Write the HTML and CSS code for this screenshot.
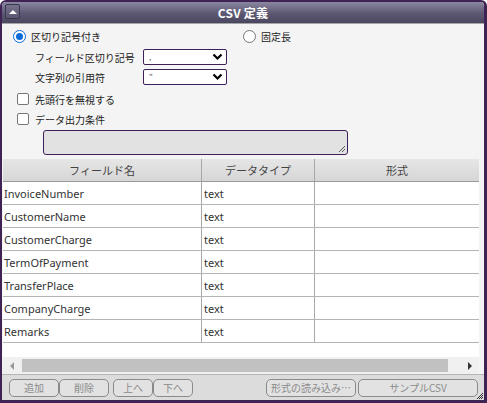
FILE: index.html
```html
<!DOCTYPE html>
<html>
<head>
<meta charset="utf-8">
<link rel="stylesheet" href="styles.css">
</head>
<body>
<div class="win">
  <div class="titlebar">
    <span class="collapse"><svg width="8" height="5" viewBox="0 0 8 5"><path d="M0 5 L4 1 L8 5 Z" fill="#fff"/></svg></span>
    <span class="title">CSV 定義</span>
  </div>
  <div class="body">
    <div class="opts">
      <div class="radio-row">
        <label class="radio checked"><span class="rb"></span>区切り記号付き</label>
        <label class="radio fixed"><span class="rb"></span>固定長</label>
      </div>
      <div class="field-row">
        <span class="flabel">フィールド区切り記号</span>
        <span class="select"><span class="val">,</span><svg class="chev" width="11" height="8" viewBox="0 0 11 8"><path d="M1.5 1.5 L5.5 5.5 L9.5 1.5" fill="none" stroke="#000" stroke-width="2.2"/></svg></span>
      </div>
      <div class="field-row">
        <span class="flabel">文字列の引用符</span>
        <span class="select"><span class="val">"</span><svg class="chev" width="11" height="8" viewBox="0 0 11 8"><path d="M1.5 1.5 L5.5 5.5 L9.5 1.5" fill="none" stroke="#000" stroke-width="2.2"/></svg></span>
      </div>
      <label class="check first"><span class="cb"></span>先頭行を無視する</label>
      <label class="check"><span class="cb"></span>データ出力条件</label>
      <div class="ta"><svg class="grip" width="8" height="8" viewBox="0 0 8 8"><path d="M7 1 L1 7 M7 4 L4 7" stroke="#555" stroke-width="1" fill="none"/></svg></div>
    </div>
    <div class="grid">
      <div class="thead">
        <div class="th c1">フィールド名</div>
        <div class="th c2">データタイプ</div>
        <div class="th c3">形式</div>
      </div>
      <div class="tbody">
        <div class="tr"><div class="td c1">InvoiceNumber</div><div class="td c2">text</div><div class="td c3"></div></div>
        <div class="tr"><div class="td c1">CustomerName</div><div class="td c2">text</div><div class="td c3"></div></div>
        <div class="tr"><div class="td c1">CustomerCharge</div><div class="td c2">text</div><div class="td c3"></div></div>
        <div class="tr"><div class="td c1">TermOfPayment</div><div class="td c2">text</div><div class="td c3"></div></div>
        <div class="tr"><div class="td c1">TransferPlace</div><div class="td c2">text</div><div class="td c3"></div></div>
        <div class="tr"><div class="td c1">CompanyCharge</div><div class="td c2">text</div><div class="td c3"></div></div>
        <div class="tr"><div class="td c1">Remarks</div><div class="td c2">text</div><div class="td c3"></div></div>
      </div>
      <div class="hscroll">
        <svg class="arr" width="5" height="8" viewBox="0 0 5 8"><path d="M5 0 L1 4 L5 8 Z" fill="#999"/></svg>
        <div class="thumb"></div>
        <svg class="arr" width="5" height="8" viewBox="0 0 5 8"><path d="M0 0 L4 4 L0 8 Z" fill="#333"/></svg>
      </div>
    </div>
    <div class="btnbar">
      <span class="btn w50">追加</span>
      <span class="btn w50">削除</span>
      <span class="btn w40 gapl">上へ</span>
      <span class="btn w40">下へ</span>
      <span class="spacer"></span>
      <span class="btn w90">形式の読み込み…</span>
      <span class="btn w120">サンプルCSV</span>
      <svg class="rgrip" width="7" height="7" viewBox="0 0 7 7"><path d="M6 0 L0 6 M6 2 L2 6 M6 4 L4 6" stroke="#333" stroke-width="1" fill="none"/></svg>
    </div>
  </div>
</div>
</body>
</html>
```
FILE: styles.css
```css
html, body {
  margin: 0;
  padding: 0;
  background: #ffffff;
}
body {
  font-family: "Noto Sans CJK JP", "Noto Sans", sans-serif;
  font-size: 10px;
  color: #222;
}
.win {
  width: 487px;
  height: 403px;
  box-sizing: border-box;
  border: 2px solid #3f2355;
  border-right-width: 3px;
  border-bottom-width: 3px;
  border-radius: 6px 6px 0 0;
  background: #f4f4f4;
  display: flex;
  flex-direction: column;
  overflow: hidden;
}
.titlebar {
  height: 21px;
  flex: none;
  background: linear-gradient(#8b87a1, #5c5873 55%, #4b4760);
  border-bottom: 1px solid #a5a5a5;
  position: relative;
  display: flex;
  align-items: center;
  justify-content: center;
}
.collapse {
  position: absolute;
  left: 3px;
  top: 2px;
  width: 13px;
  height: 13px;
  border: 1px solid #3a3650;
  border-radius: 2px;
  background: linear-gradient(#77738c, #5a566e);
  display: flex;
  align-items: center;
  justify-content: center;
}
.collapse svg { display: block; margin-top: -1px; }
.title {
  color: #fff;
  font-weight: bold;
  font-size: 12px;
  letter-spacing: 0.2px;
}
.body {
  flex: 1;
  display: flex;
  flex-direction: column;
}
.opts {
  height: 135px;
  flex: none;
  padding: 3px 0 0 0;
  box-sizing: border-box;
  font-size: 10px;
}
.radio-row {
  display: flex;
  height: 18px;
  align-items: center;
}
.radio {
  display: flex;
  align-items: center;
  color: #222;
  white-space: nowrap;
}
.radio.checked { margin-left: 11px; width: 230px; }
.rb {
  width: 11px;
  height: 11px;
  border: 1px solid #767676;
  border-radius: 50%;
  background: #fff;
  margin-right: 5px;
  box-sizing: content-box;
  position: relative;
}
.radio.checked .rb {
  border-color: #0b6bdb;
  background: #fff;
}
.radio.checked .rb::after {
  content: "";
  position: absolute;
  left: 2px;
  top: 2px;
  width: 7px;
  height: 7px;
  border-radius: 50%;
  background: #0b6bdb;
}
.field-row {
  display: flex;
  align-items: center;
  height: 20px;
  padding-left: 33px;
}
.radio-row + .field-row { margin-top: 2px; }
.flabel {
  width: 108px;
  flex: none;
  white-space: nowrap;
  color: #222;
}
.select {
  width: 84px;
  height: 16px;
  box-sizing: border-box;
  border: 1px solid #3f1f58;
  border-radius: 2px;
  background: #fff;
  display: flex;
  align-items: center;
  justify-content: space-between;
  padding: 0 3px 0 5px;
  font-size: 8px;
  color: #555;
}
.select .val { line-height: 14px; }
.chev { display: block; }
.check {
  display: flex;
  align-items: center;
  height: 20px;
  padding-left: 15px;
  color: #222;
  white-space: nowrap;
}
.check.first { margin-top: 2px; }
.cb {
  width: 10px;
  height: 10px;
  border: 1px solid #767676;
  border-radius: 2px;
  background: #fff;
  margin-right: 6px;
}
.ta {
  margin: 1px 0 0 41px;
  width: 303px;
  height: 23px;
  border: 1px solid #3f1f58;
  border-radius: 3px;
  background: #e2e2e2;
  position: relative;
}
.grip { position: absolute; right: 1px; bottom: 1px; }
.grid {
  margin: 0 5px 0 1px;
  flex: 1;
  display: flex;
  flex-direction: column;
  background: #fff;
}
.thead {
  display: flex;
  height: 22px;
  background: linear-gradient(#e6e6e6, #d6d6d6);
  border-bottom: 1px solid #9a9a9a;
  color: #444;
  font-size: 11px;
}
.th {
  display: flex;
  align-items: center;
  justify-content: center;
  box-sizing: border-box;
}
.c1 { width: 199px; border-right: 1px solid #a8a8a8; }
.c2 { width: 113px; border-right: 1px solid #a8a8a8; }
.c3 { flex: 1; }
.tbody {
  flex: 1;
}
.tr {
  display: flex;
  height: 23px;
  border-bottom: 1px solid #b4b4b4;
  box-sizing: border-box;
}
.td {
  display: flex;
  align-items: center;
  box-sizing: border-box;
  padding-left: 1px;
  color: #333;
  font-family: "Noto Sans", sans-serif;
  font-size: 11px;
}
.td.c2 { padding-left: 2px; }
.hscroll {
  height: 17px;
  background: #f0f0f0;
  display: flex;
  align-items: center;
  padding: 0 6px 0 6px;
}
.thumb {
  flex: 1;
  height: 13px;
  background: #c1c1c1;
  margin: 0 20px 0 8px;
}
.arr { display: block; flex: none; }
.btnbar {
  height: 26px;
  flex: none;
  background: #dcdcdc;
  border-top: 1px solid #b5b5b5;
  display: flex;
  align-items: center;
  padding: 0 6px 0 7px;
  position: relative;
  box-sizing: border-box;
}
.btn {
  height: 18px;
  box-sizing: border-box;
  border: 1px solid #8a8a8a;
  border-radius: 5px;
  background: #e2e2e2;
  color: #8a8a8a;
  display: flex;
  align-items: center;
  justify-content: center;
  font-size: 10px;
  white-space: nowrap;
}
.w50 { width: 50px; }
.w40 { width: 40px; }
.gapl { margin-left: 4px; }
.w90 { width: 90px; }
.w120 { width: 120px; margin-left: 2px; }
.spacer { flex: 1; }
.rgrip { position: absolute; right: 0; bottom: 0; }
```
